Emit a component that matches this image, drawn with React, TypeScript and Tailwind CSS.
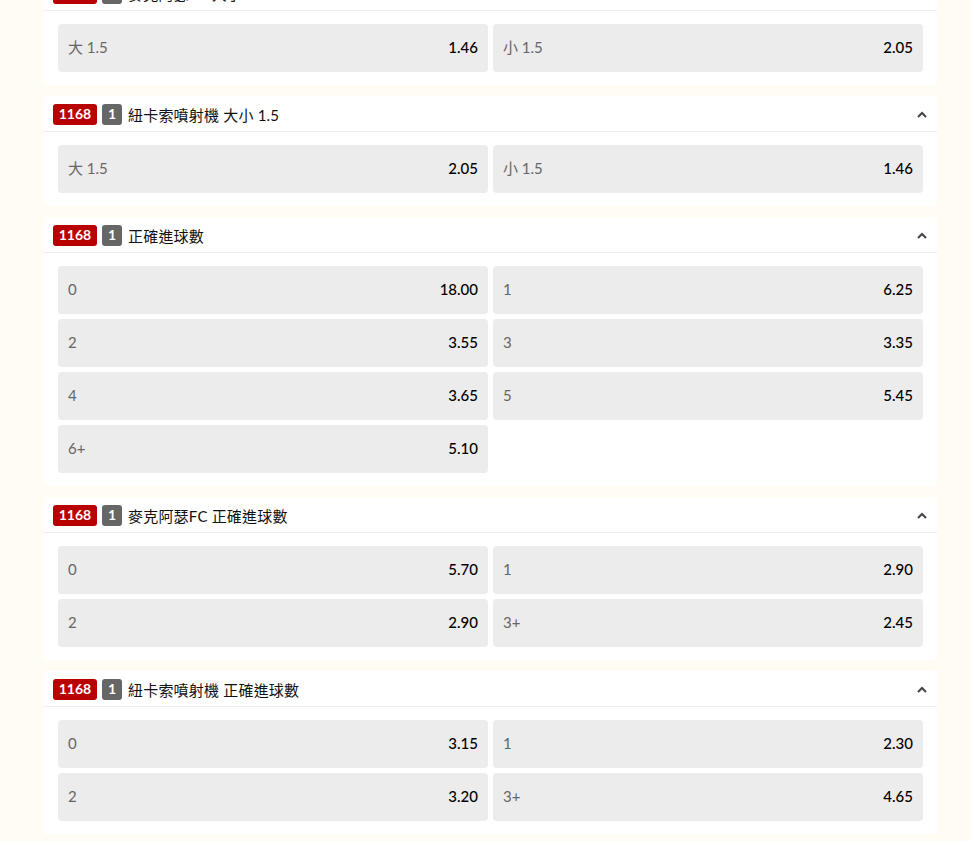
import React from 'react';

type Market = {
  title: string;
  odds: [string, string][];
};

const MARKETS: Market[] = [
  {
    title: '麥克阿瑟FC 大小 1.5',
    odds: [
      ['大 1.5', '1.46'],
      ['小 1.5', '2.05'],
    ],
  },
  {
    title: '紐卡索噴射機 大小 1.5',
    odds: [
      ['大 1.5', '2.05'],
      ['小 1.5', '1.46'],
    ],
  },
  {
    title: '正確進球數',
    odds: [
      ['0', '18.00'],
      ['1', '6.25'],
      ['2', '3.55'],
      ['3', '3.35'],
      ['4', '3.65'],
      ['5', '5.45'],
      ['6+', '5.10'],
    ],
  },
  {
    title: '麥克阿瑟FC 正確進球數',
    odds: [
      ['0', '5.70'],
      ['1', '2.90'],
      ['2', '2.90'],
      ['3+', '2.45'],
    ],
  },
  {
    title: '紐卡索噴射機 正確進球數',
    odds: [
      ['0', '3.15'],
      ['1', '2.30'],
      ['2', '3.20'],
      ['3+', '4.65'],
    ],
  },
];

function Caret() {
  return (
    <svg width="10" height="7" viewBox="0 0 10 7" fill="none">
      <path d="M1 6 L5 2 L9 6" stroke="#444" strokeWidth="2" />
    </svg>
  );
}

function MarketCard({ market, first }: { market: Market; first?: boolean }) {
  return (
    <div className={`bg-white rounded-[3px] ${first ? '-mt-[25px]' : ''}`}>
      {/* header */}
      <div className="h-[36px] flex items-center pl-[9px] pr-[10px] pt-[1px] border-b border-[#eeeeee]">
        <span className="h-[21px] w-[44px] flex items-center justify-center rounded-[3px] bg-[#b80000] text-white text-[14px] font-bold leading-none">
          1168
        </span>
        <span className="ml-[5px] h-[21px] w-[20px] flex items-center justify-center rounded-[3px] bg-[#666666] text-white text-[14px] font-bold leading-none">
          1
        </span>
        <span className="ml-[6px] pt-[3px] text-[15px] text-[#111] tracking-[0.2px]">{market.title}</span>
        <span className="ml-auto flex items-center">
          <Caret />
        </span>
      </div>
      {/* odds */}
      <div className="grid grid-cols-2 gap-[5px] px-[14px] py-[13px]">
        {market.odds.map(([label, price]) => (
          <button
            key={label}
            className="h-[48px] flex items-center justify-between px-[10px] pb-[2px] rounded-[4px] bg-[#ececec] text-[15px]"
          >
            <span className="text-[#666]">{label}</span>
            <span className="text-[#000] font-medium">{price}</span>
          </button>
        ))}
      </div>
    </div>
  );
}

export default function App() {
  return (
    <div
      className="min-h-[841px] bg-[#fffcf3] overflow-hidden"
      style={{ fontFamily: 'Lato, "Noto Sans CJK TC", sans-serif' }}
    >
      <div className="ml-[44px] w-[893px] flex flex-col gap-[11px]">
        {MARKETS.map((m, i) => (
          <MarketCard key={i} market={m} first={i === 0} />
        ))}
      </div>
    </div>
  );
}
